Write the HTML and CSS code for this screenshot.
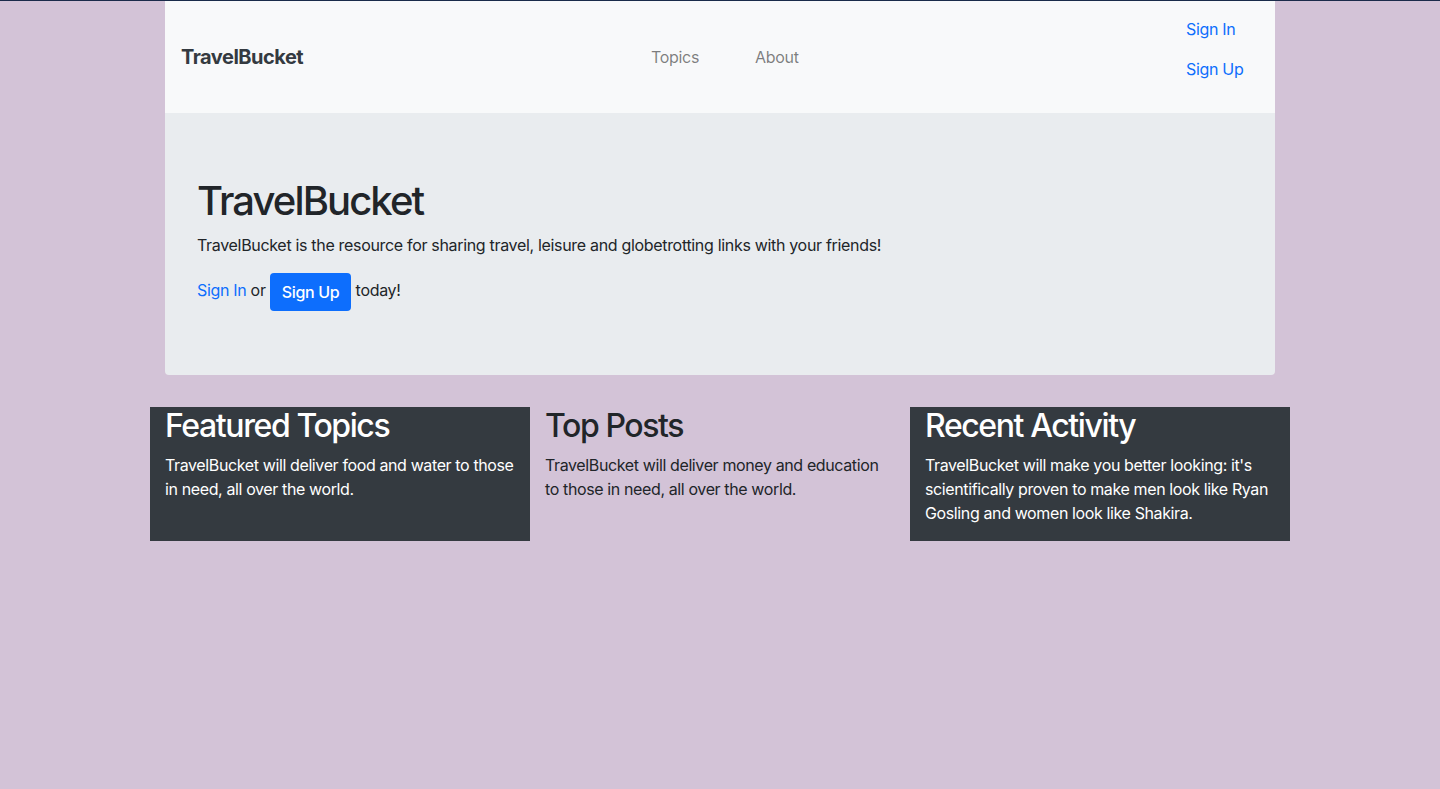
FILE: index.html
```html
<!DOCTYPE html>
<html lang="en">
<head>
<meta charset="utf-8">
<title>TravelBucket</title>
<link rel="stylesheet" href="styles.css">
</head>
<body>
<div class="topline"></div>
<div class="container">
  <nav class="navbar">
    <a class="brand" href="#">TravelBucket</a>
    <ul class="nav-center">
      <li><a class="nav-link muted" href="#">Topics</a></li>
      <li><a class="nav-link muted" href="#">About</a></li>
    </ul>
    <ul class="nav-right">
      <li><a class="nav-link blue" href="#">Sign In</a></li>
      <li><a class="nav-link blue" href="#">Sign Up</a></li>
    </ul>
  </nav>
  <section class="jumbotron">
    <h1 class="hero-title">TravelBucket</h1>
    <p class="lead">TravelBucket is the resource for sharing travel, leisure and globetrotting links with your friends!</p>
    <p class="cta"><a class="link" href="#">Sign In</a> or <a class="btn" href="#">Sign Up</a> today!</p>
  </section>
</div>
<div class="row">
  <div class="col dark">
    <h2>Featured Topics</h2>
    <p>TravelBucket will deliver food and water to those in need, all over the world.</p>
  </div>
  <div class="col">
    <h2>Top Posts</h2>
    <p>TravelBucket will deliver money and education to those in need, all over the world.</p>
  </div>
  <div class="col dark">
    <h2>Recent Activity</h2>
    <p>TravelBucket will make you better looking: it's scientifically proven to make men look like Ryan Gosling and women look like Shakira.</p>
  </div>
</div>
</body>
</html>
```

FILE: styles.css
```css
* { box-sizing: border-box; }
html, body { margin: 0; padding: 0; }
body {
  background: #d3c3d7;
  font-family: Inter, "Noto Sans", "Liberation Sans", sans-serif;
  font-size: 16px;
  line-height: 24px;
  color: #212529;
  letter-spacing: -0.32px;
}
a { text-decoration: none; }
ul { list-style: none; margin: 0; padding: 0; }

.topline { height: 1px; background: #1a2b4a; }

.container { width: 1110px; margin: 0 auto; }

.navbar {
  background: #f8f9fa;
  height: 112px;
  padding: 8px 16px;
  display: flex;
  align-items: center;
}
.brand {
  font-size: 20px;
  font-weight: 700;
  color: #343a40;
  width: 122px;
  white-space: nowrap;
  letter-spacing: -0.5px;
}
.nav-center {
  display: flex;
  margin-left: 340px;
  gap: 40px;
}
.nav-link { display: block; padding: 8px; }
.muted { color: rgba(0,0,0,0.5); }
.blue { color: #0d6efd; }
.nav-right {
  margin-left: auto;
  margin-right: 0;
  align-self: flex-start;
  margin-bottom: 16px;
  width: 81px;
}

.jumbotron {
  background: #e9ecef;
  padding: 64px 32px;
  border-radius: 0 0 4px 4px;
  margin-bottom: 32px;
}
.hero-title {
  font-size: 40px;
  line-height: 48px;
  font-weight: 500;
  margin: 0 0 8px;
  letter-spacing: -1.9px;
}
.lead { margin: 0 0 16px; }
.cta { margin: 0; }
.link { color: #0d6efd; }
.btn {
  display: inline-block;
  background: #0d6efd;
  color: #fff;
  padding: 7px 12px;
  border-radius: 4px;
  line-height: 24px;
  font-weight: 500;
  vertical-align: -2px;
}

.row {
  width: 1140px;
  margin: 0 auto;
  display: flex;
}
.col {
  flex: 1 1 0;
  padding: 0 15px;
}
.col h2 {
  font-size: 32px;
  line-height: 38px;
  font-weight: 500;
  margin: 0 0 8px;
  letter-spacing: -1.4px;
}
.col p { margin: 0 0 16px; letter-spacing: -0.38px; }
.dark { background: #343a40; color: #fff; }
```
